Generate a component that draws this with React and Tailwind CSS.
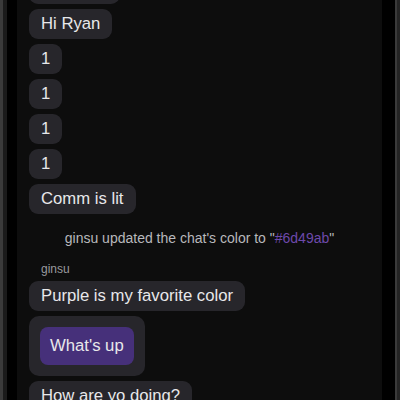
export default function App() {
  const font = { fontFamily: '"Liberation Sans", Arial, sans-serif' };
  const Bubble = ({ children }) => (
    <div className="self-start rounded-[9px] bg-[#27262b] px-3 py-[5px] text-[16.7px] leading-[20px] text-[#e8e8ea]">
      {children}
    </div>
  );
  return (
    <div className="flex h-[400px] w-[400px] overflow-hidden bg-black" style={font}>
      <div className="h-full w-[3px] bg-[#3b3b3b]" />
      <div className="h-full w-[4px] bg-[#1b1b1b]" />
      <div className="h-full w-[10px] bg-black" />
      <div className="h-full w-[365px] bg-[#0d0d0d] pl-3">
        <div className="mt-[-26px] flex flex-col gap-[5px]">
          <Bubble>Hey man</Bubble>
          <Bubble>Hi Ryan</Bubble>
          <Bubble>1</Bubble>
          <Bubble>1</Bubble>
          <Bubble>1</Bubble>
          <Bubble>1</Bubble>
          <Bubble>Comm is lit</Bubble>
          <div className="-ml-3 mt-[11px] mb-[11px] text-center text-[14px] leading-[16px] text-[#b8b8bc]">
            ginsu updated the chat's color to "<span className="text-[#6d49ab]">#6d49ab</span>"
          </div>
          <div className="ml-3 text-[12px] leading-[14px] text-[#9a9a9e]">ginsu</div>
          <Bubble>Purple is my favorite color</Bubble>
          <div className="self-start rounded-[10px] bg-[#27262b] p-[11px]">
            <div className="rounded-[8px] bg-[#46307a] px-[10px] py-[9px] text-[16.7px] leading-[20px] text-[#e8e8ea]">
              What's up
            </div>
          </div>
          <Bubble>How are yo doing?</Bubble>
        </div>
      </div>
      <div className="h-full w-[13px] bg-black" />
      <div className="h-full w-[2px] bg-[#3a3a3a]" />
      <div className="h-full w-[3px] bg-[#242424]" />
    </div>
  );
}
